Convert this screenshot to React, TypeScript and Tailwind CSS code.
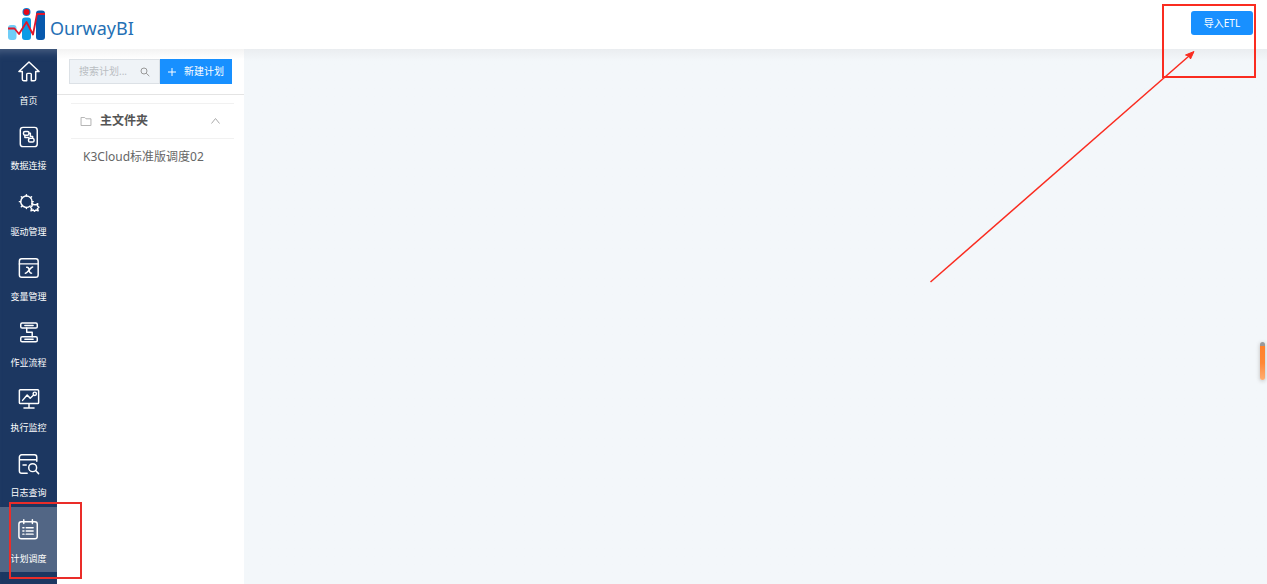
import { useState } from "react";
import type { ReactNode } from "react";

const menu: { name: string; icon: ReactNode }[] = [
  {
    name: "首页",
    icon: <path d="M1 11.500 12 1l11 10.500h-3.700V20a1.500 1.500 0 0 1-1.500 1.500h-3.300v-7a1 1 0 0 0-1-1h-3a1 1 0 0 0-1 1v7H6.200A1.500 1.500 0 0 1 4.700 20v-8.500Z" />,
  },
  {
    name: "数据连接",
    icon: (
      <>
        <rect x="2.500" y="1.500" width="18.500" height="21" rx="3" />
        <rect x="6" y="6" width="6" height="4" rx="1.500" />
        <rect x="11.500" y="13.500" width="6" height="4" rx="1.500" />
        <path d="M7.500 10v2.500h3.500l1.500 1M12 8h1.500v3.500H16v2" />
      </>
    ),
  },
  {
    name: "驱动管理",
    icon: (
      <>
        <path d="M13.200 15.300a6.200 6.200 0 1 1 2.200-4.300l-.4 2" />
        <path d="M9.200 4.300V3M13.800 6.100l1-1M4.600 6.100l-1-1M2.900 10.500H1.500M4.600 15l-1 1M9.200 16.800V18M15.400 10.500h1.200" />
        <path d="m15.500 12.800 2 1.200h2l2-1.200-.3 2.400 1.600 1.400-1.600 1.400.8 2.500-2.500-.8-1.500 1.300-1.300-1.300-2.500.7.700-2.400-1.200-1.400 1.700-1.400Z" />
        <circle cx="18.300" cy="16.700" r=".8" stroke="#1c3761" />
      </>
    ),
  },
  {
    name: "变量管理",
    icon: (
      <>
        <rect x="1.500" y="2" width="20.500" height="20" rx="2.500" />
        <path d="M1.500 7.500H22M9.500 11.200c1.800-.3 2.200.6 2.600 2.800.4 2.400 1 4 2.700 3.600M16 11c-2.300 0-5.500 6.800-8 6.700" />
      </>
    ),
  },
  {
    name: "作业流程",
    icon: (
      <>
        <rect x="3" y="0" width="18" height="5.500" rx="1.500" />
        <rect x="3" y="15" width="18" height="5.500" rx="1.500" />
        <path d="M7.500 2.700h9M7.500 17.800h9M9.500 5.500v4.700h6V15" />
      </>
    ),
  },
  {
    name: "执行监控",
    icon: (
      <>
        <path d="M22.500 7v9a1 1 0 0 1-1 1h-19a1 1 0 0 1-1-1V3a1 1 0 0 1 1-1h19a1 1 0 0 1 1 1v4M12 17v4.500M6.500 21.800h11" />
        <path d="m5 13.500 5-5.800 3.300 3.500L17 7.700" />
        <circle cx="18.300" cy="6.300" r="1.800" />
      </>
    ),
  },
  {
    name: "日志查询",
    icon: (
      <>
        <path d="M20.500 9V4.500A2.500 2.500 0 0 0 18 2H4A2.500 2.500 0 0 0 1.500 4.500v15A2.500 2.500 0 0 0 4 22h6M2 7.300h18.500M5.500 13H9" />
        <circle cx="16" cy="16" r="4.300" />
        <path d="m19.200 19.200 3.300 3.300" />
      </>
    ),
  },
  {
    name: "计划调度",
    icon: (
      <>
        <rect x="1" y="3" width="20" height="18.500" rx="2.500" />
        <path d="M6.300.7V5M15.700.7V5M9 9.500h7.500M9 13h7.500M9 16.500h7.500M5.300 9.500h1.200M5.300 13h1.200M5.300 16.500h1.200" />
      </>
    ),
  },
];

const Logo = () => (
  <a href="#" className="flex items-center gap-1 text-[18px] leading-6 text-[#2470b5]">
    <svg className="mt-0.5 h-8 w-[38px]" viewBox="0 0 38 32" fill="none">
      <rect x="0" y="17" width="8.500" height="15" rx="3" fill="#6fcdf7" />
      <rect x="14" y="9.500" width="9" height="22.500" rx="3" fill="#0c9be6" />
      <rect x="28" y="2.500" width="9" height="29.500" rx="3" fill="#0759ad" />
      <circle cx="18.500" cy="4" r="4" fill="#0b7ed0" />
      <circle cx="18.500" cy="4" r="3" fill="#e60719" />
      <path d="M0 20.500h6.500L11 26l7.500-12L25 26.500 29 6h8" stroke="#e0162b" strokeWidth="1.800" strokeLinejoin="round" />
    </svg>
    <span className="pt-2.5">OurwayBI</span>
  </a>
);

const Sidebar = () => {
  const [active, setActive] = useState("计划调度");

  return (
    <aside className="w-[57px] shrink-0 bg-[#1c3761] shadow-[inset_0_10px_10px_-8px_#53688a]">
      <nav className="grid h-[523px] auto-rows-fr">
        {menu.map((item) => (
          <button
            key={item.name}
            onClick={() => setActive(item.name)}
            className={`${
              active === item.name ? "bg-[#526685]" : ""
            } flex flex-col items-center gap-3 pt-3 text-[9px] leading-3 text-white`}
          >
            <svg
              className="size-[22px] overflow-visible"
              viewBox="0 0 24 24"
              fill="none"
              stroke="currentColor"
              strokeWidth="1.600"
              strokeLinecap="round"
              strokeLinejoin="round"
            >
              {item.icon}
            </svg>
            {item.name}
          </button>
        ))}
      </nav>
    </aside>
  );
};

const PlanPanel = () => {
  const [open, setOpen] = useState(true);

  return (
    <section className="w-[187px] shrink-0 bg-linear-to-b from-[#f3f3f3] to-white to-[10px]">
      <div className="flex border-b border-[#e4e4e4] px-3 py-2.5">
        <label className="flex h-[25px] min-w-0 flex-1 items-center border border-[#dce1e6] bg-[#eff3f7] px-[9px]">
          <input
            aria-label="搜索计划"
            placeholder="搜索计划..."
            className="w-full min-w-0 bg-transparent text-[10px] outline-none placeholder:text-[#b9bdc2]"
          />
          <svg className="size-[10px] shrink-0 text-[#999]" viewBox="0 0 12 12" fill="none" stroke="currentColor" strokeWidth="1.200">
            <circle cx="4.800" cy="4.800" r="3.600" />
            <path d="m7.500 7.500 3.700 3.500" />
          </svg>
        </label>
        <button className="flex h-[25px] w-[72px] items-center justify-center gap-2 bg-[#1890ff] text-[10px] text-white">
          <svg className="size-2" viewBox="0 0 8 8" stroke="currentColor">
            <path d="M4 0v8M0 4h8" />
          </svg>
          新建计划
        </button>
      </div>
      <div className="pt-2 pr-2.5 pl-3.5">
        <button
          onClick={() => setOpen(!open)}
          className="flex h-9 w-full items-center border-y border-[#f1f1f1] pr-3.5 pl-[9px] text-[12px] font-bold text-[#555]"
        >
          <svg className="mr-2 h-[9px] w-3 text-[#aaa]" viewBox="0 0 12 10" fill="none" stroke="currentColor">
            <path d="M.5 9.500v-9h4L6 2h5.500v7.500Z" />
          </svg>
          主文件夹
          <svg className={`${open ? "" : "rotate-180"} ml-auto h-[6px] w-[9px] text-[#aaa]`} viewBox="0 0 9 6" fill="none" stroke="currentColor">
            <path d="m.5 5.500 4-5 4 5" />
          </svg>
        </button>
        {open && (
          <a href="#" className="flex h-9 items-center pl-3 text-[12px] text-[#666]">
            K3Cloud标准版调度02
          </a>
        )}
      </div>
    </section>
  );
};

const Annotations = () => (
  <div className="pointer-events-none">
    <div className="absolute top-1 right-[11px] h-[74px] w-[94px] border-2 border-[#fa2c20]" />
    <div className="absolute top-[502px] left-[9px] h-[77px] w-[73px] border-2 border-[#ea2d29]" />
    <svg className="absolute top-[50px] right-[72px] h-[234px] w-[266px]" viewBox="0 0 266 234">
      <path d="M1.500 232 260 6" stroke="#fa2c20" strokeWidth="1.500" />
      <path d="m265 1.500-3.500 7.500-1.500-3-3.500-1Z" fill="#fa2c20" stroke="#fa2c20" />
    </svg>
  </div>
);

const App = () => (
  <div className="relative flex min-h-screen flex-col overflow-hidden bg-[#f3f7fa] font-['Noto_Sans','Noto_Sans_CJK_SC',sans-serif]">
    <header className="flex h-[49px] shrink-0 items-start justify-between bg-white pt-[6px] pr-3.5 pl-2">
      <Logo />
      <button className="mt-[5px] h-6 w-[62px] rounded-[3px] bg-[#1890ff] text-[10px] text-white">导入ETL</button>
    </header>
    <div className="flex flex-1">
      <Sidebar />
      <PlanPanel />
      <main className="flex-1 bg-linear-to-b from-[#eaedf0] to-[#f3f7fa] to-[12px]" />
    </div>
    <div className="absolute top-[342px] right-0.5 h-[38px] w-[5px] rounded-sm border-t-4 border-[#999] bg-linear-to-b from-[#ff812b] via-[#ff8834] to-[#ffae70] shadow-[0_1px_4px_#bbb]" />
    <Annotations />
  </div>
);

export default App;
